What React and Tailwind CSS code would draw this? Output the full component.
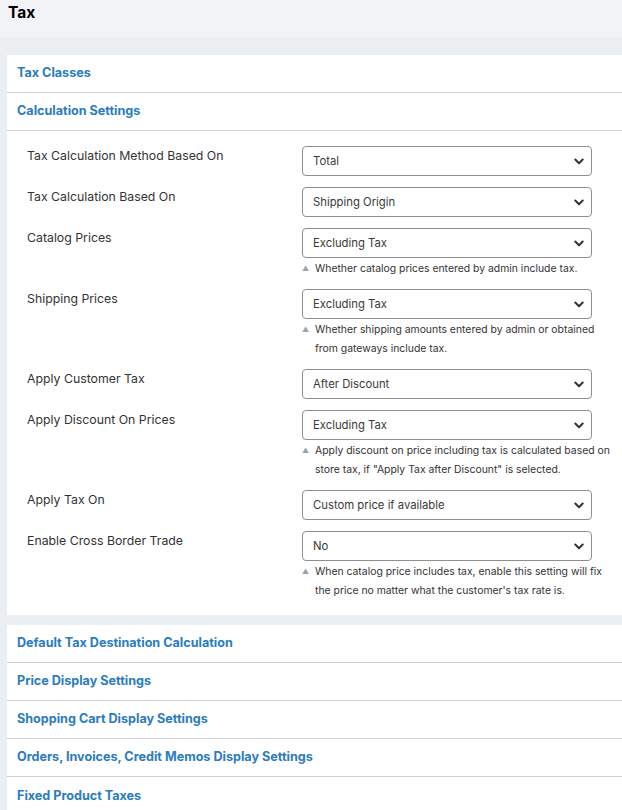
import React from "react";

const font = { fontFamily: "Inter, 'Noto Sans', sans-serif" };

const rows = [
  { label: "Tax Calculation Method Based On", value: "Total" },
  { label: "Tax Calculation Based On", value: "Shipping Origin" },
  { label: "Catalog Prices", value: "Excluding Tax", note: ["Whether catalog prices entered by admin include tax."] },
  { label: "Shipping Prices", value: "Excluding Tax", note: ["Whether shipping amounts entered by admin or obtained", "from gateways include tax."] },
  { label: "Apply Customer Tax", value: "After Discount" },
  { label: "Apply Discount On Prices", value: "Excluding Tax", note: ["Apply discount on price including tax is calculated based on", "store tax, if \"Apply Tax after Discount\" is selected."] },
  { label: "Apply Tax On", value: "Custom price if available" },
  { label: "Enable Cross Border Trade", value: "No", note: ["When catalog price includes tax, enable this setting will fix", "the price no matter what the customer's tax rate is."] },
];

function Chevron() {
  return (
    <svg width="10" height="7" viewBox="0 0 10 7" fill="none">
      <path d="M1.3 1.5 L5 5.2 L8.7 1.5" stroke="#333" strokeWidth="2" strokeLinecap="round" strokeLinejoin="round" />
    </svg>
  );
}

function Heading({ children, last }) {
  return (
    <div className={`h-[38px] flex items-center pl-[10px] text-[12.6px] font-bold text-[#2b7cc0] ${last ? "" : "border-b border-[#cfd2d6]"}`}>
      {children}
    </div>
  );
}

export default function App() {
  return (
    <div className="w-[622px] h-[810px] overflow-hidden bg-[#eceff2]" style={font}>
      <div className="h-[37px] bg-[#f1f3f6] pl-[8px] pt-[1px] text-[15.5px] font-bold text-black">Tax</div>
      <div className="h-[18px]" />
      <div className="ml-[7px] bg-white">
        <Heading>Tax Classes</Heading>
        <Heading>Calculation Settings</Heading>
        <div className="pt-[15px] pb-[15px] flex flex-col gap-[11px]">
          {rows.map((r) => (
            <div key={r.label} className="flex">
              <div className="w-[295px] shrink-0 pl-[20px] pt-[1px] text-[12.3px] leading-[18px] text-[#333]">{r.label}</div>
              <div className="w-[290px] shrink-0">
                <div className="h-[30px] rounded-[4px] border border-[#8f8f8f] flex items-center justify-between pl-[10px] pr-[7px] text-[11.3px] text-[#3a3a3a]">
                  <span>{r.value}</span>
                  <Chevron />
                </div>
                {r.note && (
                  <div className="pt-[1px] text-[10.4px] leading-[19px] text-[#333] whitespace-nowrap">
                    {r.note.map((line, i) => (
                      <div key={i} className="flex items-center">
                        <span className="w-[13px] shrink-0 text-[7px] leading-[19px] text-[#9aa3ac]">{i === 0 ? "▲" : ""}</span>
                        <span>{line}</span>
                      </div>
                    ))}
                  </div>
                )}
              </div>
            </div>
          ))}
        </div>
      </div>
      <div className="h-[10px]" />
      <div className="ml-[7px] bg-white">
        <Heading>Default Tax Destination Calculation</Heading>
        <Heading>Price Display Settings</Heading>
        <Heading>Shopping Cart Display Settings</Heading>
        <Heading>Orders, Invoices, Credit Memos Display Settings</Heading>
        <Heading last>Fixed Product Taxes</Heading>
      </div>
    </div>
  );
}
